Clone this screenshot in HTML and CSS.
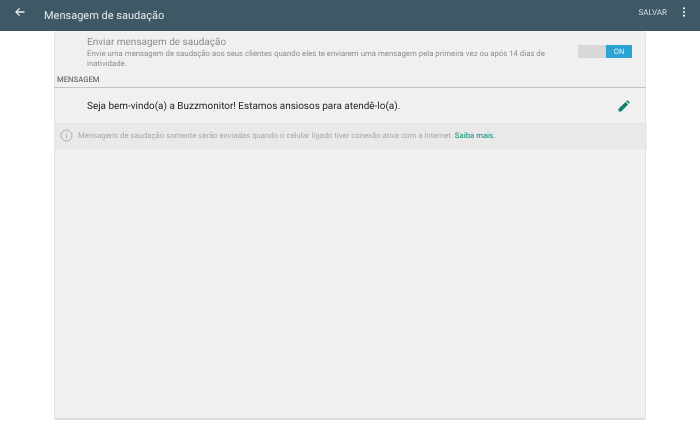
FILE: index.html
```html
<!DOCTYPE html>
<html lang="pt">
<head>
<meta charset="utf-8">
<title>Mensagem de saudação</title>
<link rel="stylesheet" href="styles.css">
</head>
<body>
<div class="page">
<header class="appbar">
  <svg class="back" width="12" height="12" viewBox="0 0 12 12"><path d="M10.5 6H2.2M5.6 2.4 2 6l3.6 3.6" fill="none" stroke="#e8edf0" stroke-width="1.3"/></svg>
  <h1 class="title">Mensagem de saudação</h1>
  <span class="save">SALVAR</span>
  <svg class="more" width="4" height="10" viewBox="0 0 4 10"><circle cx="2" cy="1.3" r="1.1" fill="#eef2f4"/><circle cx="2" cy="5" r="1.1" fill="#eef2f4"/><circle cx="2" cy="8.7" r="1.1" fill="#eef2f4"/></svg>
</header>
<main class="card">
  <section class="setting">
    <div class="setting-text">
      <div class="setting-title">Enviar mensagem de saudação</div>
      <p class="setting-desc">Envie uma mensagem de saudação aos seus clientes quando eles te enviarem uma mensagem pela primeira vez ou após 14 dias de inatividade.</p>
    </div>
    <div class="toggle"><span class="toggle-off"></span><span class="toggle-on">ON</span></div>
  </section>
  <div class="section-label">MENSAGEM</div>
  <section class="message">
    <span class="message-text">Seja bem-vindo(a) a Buzzmonitor! Estamos ansiosos para atendê-lo(a).</span>
    <svg class="pencil" width="12" height="12" viewBox="0 0 24 24"><path d="M1 23v-5.5L15 3.8l5.2 5.2L6.4 23zM16.4 2.4l1.3-1.2a1.5 1.5 0 0 1 2.1 0l3 3a1.5 1.5 0 0 1 0 2.1l-1.2 1.3z" fill="#127f6e"/></svg>
  </section>
  <section class="notice">
    <svg class="info" width="13" height="13" viewBox="0 0 13 13"><circle cx="6.5" cy="6.5" r="5.5" fill="none" stroke="#a9a9a9" stroke-width="1"/><path d="M6.5 5.8v3.6M6.5 3.6v1.1" stroke="#a9a9a9" stroke-width="1"/></svg>
    <span class="notice-text">Mensagens de saudação somente serão enviadas quando o celular ligado tiver conexão ativa com a Internet. <a class="link">Saiba mais.</a></span>
  </section>
</main>
</div>
</body>
</html>
```
FILE: styles.css
```css
* { box-sizing: border-box; }
html, body { margin: 0; height: 100%; }
body {
  width: 700px;
  height: 421px;
  overflow: hidden;
  background: #fff;
  font-family: Roboto, "Liberation Sans", sans-serif;
  text-rendering: geometricPrecision;
}
.page {
  height: 421px;
  display: flex;
  flex-direction: column;
  filter: blur(0.35px);
}
.appbar {
  height: 31px;
  flex: none;
  background: #3f5866;
  color: #e6ebee;
  display: flex;
  align-items: center;
  padding: 0 14px;
}
.back { margin-top: -7px; }
.title {
  margin: -1px 0 0 18px;
  font-size: 11px;
  font-weight: 400;
  flex: 1;
  color: #e4e9ec;
}
.save { font-size: 8px; color: #d5dde1; margin-top: -7px; }
.more { margin: -7px 0 0 15px; }
.card {
  width: 592px;
  height: 389px;
  margin: 0 0 0 54px;
  background: #f0f0f0;
  border: 1px solid #e3e3e3;
  border-top: 0;
  border-bottom: 2px solid #dcdcdc;
  border-radius: 2px;
}
.setting {
  height: 42px;
  padding: 5px 13px 0 32px;
  display: flex;
  justify-content: space-between;
}
.setting-text { width: 470px; }
.setting-title { font-size: 10px; line-height: 13px; color: #8b8b8b; }
.setting-desc { margin: 0; font-size: 7.8px; line-height: 9.5px; color: #8d8d8d; }
.toggle { display: flex; width: 54px; height: 13px; margin-top: 9px; }
.toggle-off { flex: 1; background: #d8d8d8; }
.toggle-on {
  width: 26px;
  background: #2ba3d3;
  color: #e3f2f8;
  font-size: 7.5px;
  line-height: 13px;
  text-align: center;
}
.section-label {
  height: 15px;
  padding: 2px 0 0 3px;
  font-size: 7.7px;
  font-weight: 500;
  line-height: 10px;
  color: #6f6f6f;
  border-bottom: 1px solid #c4c4c4;
  margin: 0 -1px;
}
.message {
  height: 36px;
  padding: 1px 15px 0 32px;
  display: flex;
  align-items: center;
  justify-content: space-between;
  border-bottom: 1px solid #e2e2e2;
}
.message-text { font-size: 9.95px; color: #1f1f1f; }
.notice {
  height: 25px;
  margin: 0 -2px 0 -1px;
  padding: 0 0 2px 6px;
  display: flex;
  align-items: center;
  gap: 5px;
  background: #e9e9e9;
}
.notice-text { font-size: 7.75px; color: #a8a8a8; }
.link { color: #2c9c8a; font-weight: 500; }
```
